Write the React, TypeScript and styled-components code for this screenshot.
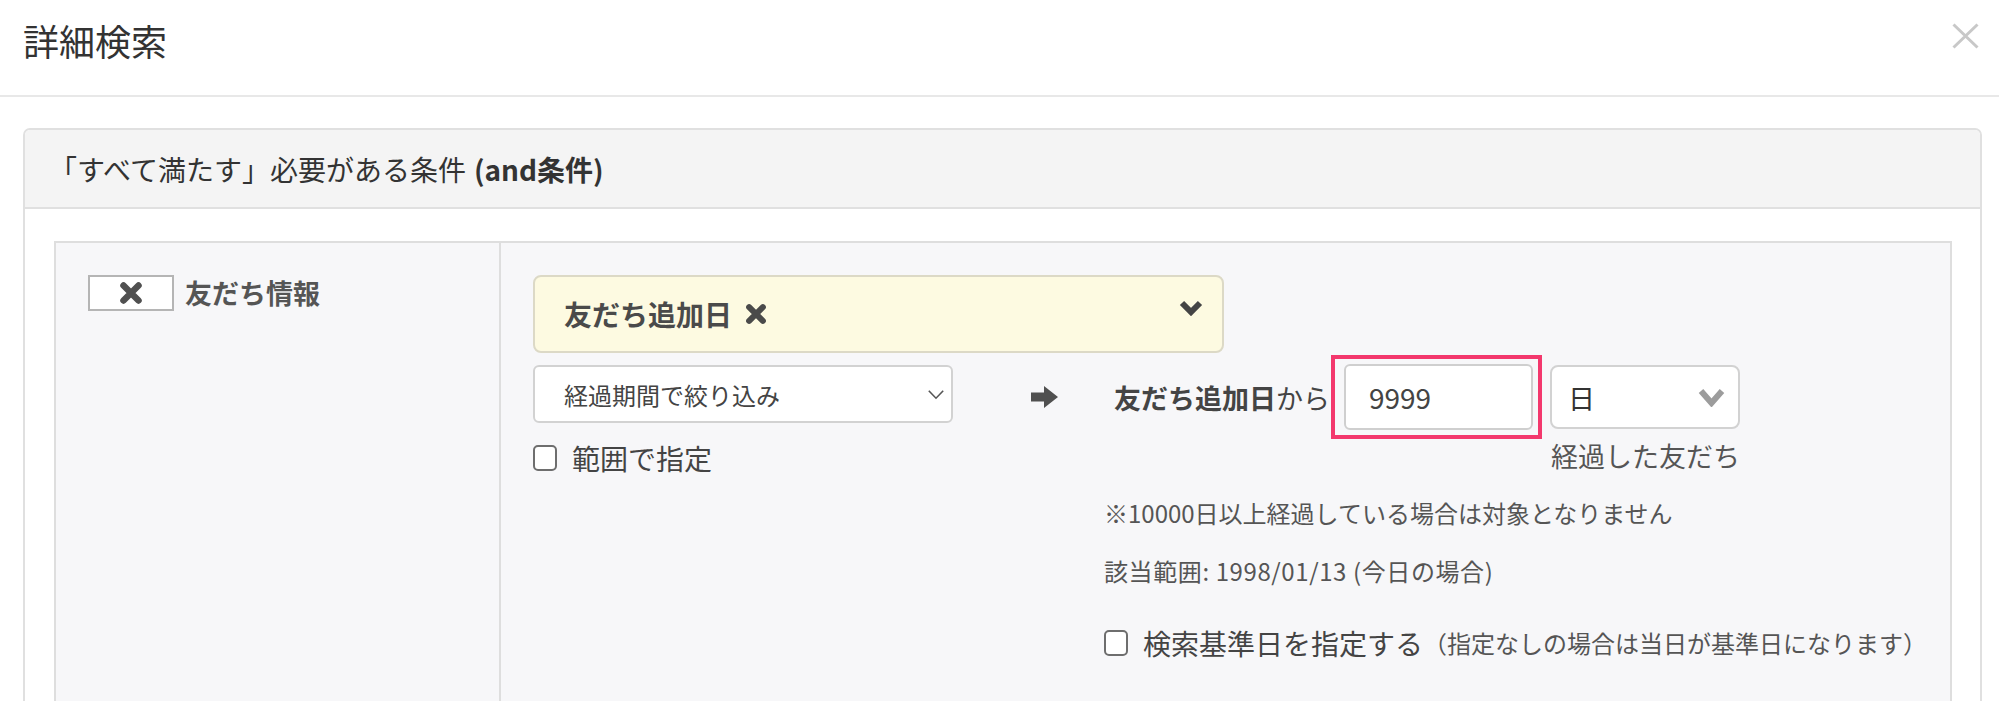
import React from 'react'
import styled, { createGlobalStyle } from 'styled-components'

const GlobalStyle = createGlobalStyle`
html, body {
  margin: 0;
  padding: 0;
  background: #fff;
  overflow: hidden;
}
body {
  font-family: "Noto Sans CJK JP", "Noto Sans", sans-serif;
  color: #555;
}
* {
  box-sizing: border-box;
}
`

export const Modal = styled.div`
width: 1999px;
`

export const Header = styled.div`
display: flex;
justify-content: space-between;
align-items: flex-start;
height: 97px;
padding: 0 20px 0 23px;
border-bottom: 2px solid #e8e8e8;
`

export const Title = styled.h1`
margin: 22px 0 0;
font-size: 36px;
font-weight: 400;
line-height: 1;
color: #333;
`

export const CloseButton = styled.button`
display: flex;
margin-top: 23px;
padding: 0;
border: 0;
background: none;
`

export const Body = styled.div`
padding: 31px 17px 0 23px;
`

export const Panel = styled.div`
border: 2px solid #e0e0e0;
border-radius: 7px 7px 0 0;
background: #fff;
`

export const PanelHeading = styled.div`
display: flex;
align-items: center;
height: 79px;
padding-left: 24px;
background: #f4f4f4;
border-bottom: 2px solid #e0e0e0;
border-radius: 5px 5px 0 0;
font-size: 28px;
color: #333;
b {
  font-weight: 700;
  margin-left: 8px;
}
`

export const PanelBody = styled.div`
padding: 32px 28px 0 29px;
`

export const ConditionTable = styled.div`
display: grid;
grid-template-columns: 445px 1fr;
border: 2px solid #dedede;
background: #f7f7f9;
`

export const LeftCell = styled.div`
display: flex;
align-items: flex-start;
gap: 11px;
padding: 32px 0 0 32px;
border-right: 2px solid #dedede;
`

export const RemoveBox = styled.div`
display: flex;
align-items: center;
justify-content: center;
width: 86px;
height: 36px;
border: 2px solid #b5b5b5;
background: #fff;
`

export const CategoryLabel = styled.span`
font-size: 27px;
font-weight: 700;
line-height: 36px;
color: #555;
`

export const RightCell = styled.div`
padding: 32px 0 60px 32px;
`

export const FieldSelect = styled.div`
display: flex;
align-items: center;
justify-content: space-between;
width: 691px;
height: 78px;
padding: 0 18px 0 29px;
border: 2px solid #dcd9c6;
border-radius: 8px;
background: #fdfae1;
svg.chev {
  margin-bottom: 14px;
}
`

export const FieldName = styled.span`
display: flex;
align-items: center;
gap: 13px;
font-size: 28px;
font-weight: 700;
color: #4a4a4a;
`

export const Row = styled.div`
display: flex;
align-items: flex-start;
margin-top: 2px;
`

export const LeftCol = styled.div`
width: 420px;
padding-top: 10px;
`

export const PeriodSelect = styled.div`
display: flex;
align-items: center;
justify-content: space-between;
height: 58px;
padding: 0 6px 0 29px;
border: 2px solid #d2d2d2;
border-radius: 6px;
background: #fff;
font-size: 24px;
color: #444;
`

export const CheckRow = styled.label<{ $top: number }>`
display: flex;
align-items: center;
gap: 15px;
margin-top: ${p => p.$top}px;
font-size: 28px;
line-height: 34px;
color: #444;
small {
  margin-left: -15px;
  font-size: 24px;
  color: #555;
}
`

export const Checkbox = styled.input`
appearance: none;
margin: 0;
width: 24px;
height: 26px;
border: 2px solid #6e6e6e;
border-radius: 5px;
background: #fff;
`

export const RightCol = styled.div`
margin-left: 78px;
`

export const CompareBlock = styled.div`
width: fit-content;
`

export const CompareLine = styled.div`
display: flex;
align-items: center;
height: 84px;
font-size: 27px;
color: #444;
b {
  margin-left: 56px;
  font-weight: 700;
}
`

export const Highlight = styled.div`
margin-left: 1px;
padding: 5px 5px 5px 9px;
border: 4px solid #f3386d;
`

export const NumberInput = styled.input`
width: 189px;
height: 66px;
padding: 0 0 0 23px;
border: 2px solid #cfcfcf;
border-radius: 6px;
font-family: inherit;
font-size: 28px;
color: #444;
outline: none;
`

export const UnitSelect = styled.div`
display: flex;
align-items: center;
justify-content: space-between;
width: 190px;
height: 64px;
margin-left: 8px;
padding: 0 12px 0 16px;
border: 2px solid #d2d2d2;
border-radius: 8px;
background: #fff;
font-size: 27px;
color: #333;
`

export const Caption = styled.div`
text-align: right;
font-size: 27px;
line-height: 34px;
color: #555;
`

export const Notes = styled.div`
margin-left: 73px;
`

export const Note = styled.p<{ $top: number; $wide?: boolean }>`
margin: ${p => p.$top}px 0 0;
font-size: 24px;
line-height: 34px;
color: #555;
letter-spacing: ${p => (p.$wide ? '0.6px' : '0')};
`

const Cross = ({ size, color }: { size: number; color: string }) => (
  <svg width={size} height={size} viewBox="0 0 24 24">
    <path d="M4.5 4.5 L19.5 19.5 M19.5 4.5 L4.5 19.5" stroke={color} strokeWidth="6.5" strokeLinecap="round" />
  </svg>
)

const Chevron = ({ w, h, color, stroke, className }: { w: number; h: number; color: string; stroke: number; className?: string }) => (
  <svg className={className} width={w} height={h} viewBox={`0 0 ${w} ${h}`}>
    <polyline
      points={`${stroke / 2 + 1},${stroke / 2 + 1} ${w / 2},${h - stroke / 2 - 1} ${w - stroke / 2 - 1},${stroke / 2 + 1}`}
      fill="none"
      stroke={color}
      strokeWidth={stroke}
      strokeLinejoin="miter"
    />
  </svg>
)

const ArrowRight = () => (
  <svg width="27" height="22" viewBox="0 0 27 22">
    <path d="M0 6.5 H13 V0 L27 11 L13 22 V15.5 H0 Z" fill="#505050" />
  </svg>
)

export default function App() {
  return (
    <Modal>
      <GlobalStyle />
      <Header>
        <Title>詳細検索</Title>
        <CloseButton aria-label="close">
          <svg width="27" height="26" viewBox="0 0 27 26">
            <path d="M1.5 1.5 L25.5 24.5 M25.5 1.5 L1.5 24.5" stroke="#c8c8c8" strokeWidth="3" />
          </svg>
        </CloseButton>
      </Header>
      <Body>
        <Panel>
          <PanelHeading>
            「すべて満たす」必要がある条件<b>(and条件)</b>
          </PanelHeading>
          <PanelBody>
            <ConditionTable>
              <LeftCell>
                <RemoveBox>
                  <Cross size={24} color="#505050" />
                </RemoveBox>
                <CategoryLabel>友だち情報</CategoryLabel>
              </LeftCell>
              <RightCell>
                <FieldSelect>
                  <FieldName>
                    友だち追加日
                    <Cross size={22} color="#4a4a4a" />
                  </FieldName>
                  <Chevron className="chev" w={26} h={17} color="#444" stroke={6} />
                </FieldSelect>
                <Row>
                  <LeftCol>
                    <PeriodSelect>
                      経過期間で絞り込み
                      <Chevron w={18} h={11} color="#555" stroke={1.6} />
                    </PeriodSelect>
                    <CheckRow $top={18}>
                      <Checkbox type="checkbox" />
                      範囲で指定
                    </CheckRow>
                  </LeftCol>
                  <RightCol>
                    <CompareBlock>
                      <CompareLine>
                        <ArrowRight />
                        <b>友だち追加日</b>から
                        <Highlight>
                          <NumberInput defaultValue="9999" />
                        </Highlight>
                        <UnitSelect>
                          日
                          <Chevron w={29} h={20} color="#9c9c9c" stroke={6} />
                        </UnitSelect>
                      </CompareLine>
                      <Caption>経過した友だち</Caption>
                    </CompareBlock>
                    <Notes>
                      <Note $top={23}>※10000日以上経過している場合は対象となりません</Note>
                      <Note $top={24} $wide>該当範囲: 1998/01/13 (今日の場合)</Note>
                      <CheckRow $top={38}>
                        <Checkbox type="checkbox" />
                        検索基準日を指定する
                        <small>（指定なしの場合は当日が基準日になります）</small>
                      </CheckRow>
                    </Notes>
                  </RightCol>
                </Row>
              </RightCell>
            </ConditionTable>
          </PanelBody>
        </Panel>
      </Body>
    </Modal>
  )
}
